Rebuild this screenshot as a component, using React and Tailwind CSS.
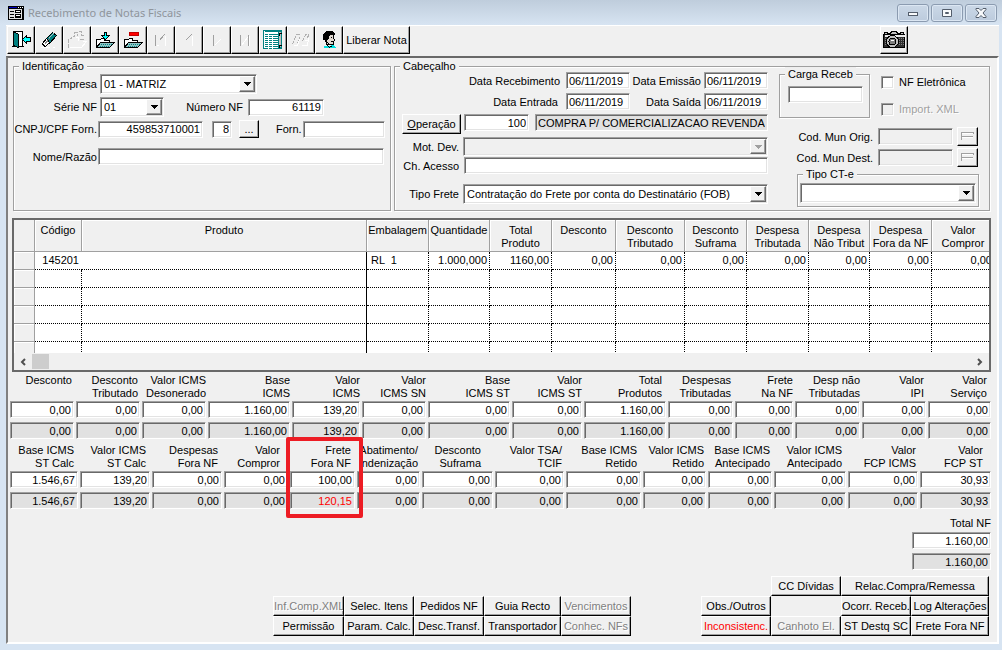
import clsx from "clsx";

const sunken =
  "border border-t-[#a0a0a0] border-l-[#a0a0a0] border-r-white border-b-white shadow-[inset_1px_1px_0_#696969,inset_-1px_-1px_0_#e3e3e3]";
const raised =
  "border border-t-white border-l-white border-r-black border-b-black shadow-[inset_-1px_-1px_0_#a0a0a0]";

const toolbar = [
  { name: "Sair", icon: "exit" },
  { name: "Limpar", icon: "eraser" },
  { name: "Pesquisar", icon: "query", disabled: true },
  { name: "Salvar", icon: "save" },
  { name: "Excluir", icon: "remove" },
  { name: "Primeiro", icon: "first", disabled: true },
  { name: "Anterior", icon: "prev", disabled: true },
  { name: "Próximo", icon: "next", disabled: true },
  { name: "Último", icon: "last", disabled: true },
  { name: "Lista", icon: "list" },
  { name: "Localizar", icon: "find", disabled: true },
  { name: "Usuário", icon: "user" },
];

const columns = [
  { label: ["Código"], width: "w-[47px]", value: "145201", align: "text-right pr-[3px]" },
  { label: ["Produto"], width: "", value: "", align: "text-right" },
  { label: ["Embalagem"], width: "w-[62px]", value: "RL  1", align: "text-left pl-1" },
  { label: ["Quantidade"], width: "w-[61px]", value: "1.000,000" },
  { label: ["Total", "Produto"], width: "w-[62px]", value: "1160,00" },
  { label: ["Desconto"], width: "w-[64px]", value: "0,00" },
  { label: ["Desconto", "Tributado"], width: "w-[69px]", value: "0,00" },
  { label: ["Desconto", "Suframa"], width: "w-[62px]", value: "0,00" },
  { label: ["Despesa", "Tributada"], width: "w-[62px]", value: "0,00" },
  { label: ["Despesa", "Não Tribut"], width: "w-[61px]", value: "0,00" },
  { label: ["Despesa", "Fora da NF"], width: "w-[62px]", value: "0,00" },
  { label: ["Valor", "Compror"], width: "w-[63px]", value: "0,00" },
];

const totals1 = [
  { label: ["Desconto", ""], value: "0,00" },
  { label: ["Desconto", "Tributado"], value: "0,00" },
  { label: ["Valor ICMS", "Desonerado"], value: "0,00", pad: "pr-0" },
  { label: ["Base", "ICMS"], value: "1.160,00", pad: "pr-0" },
  { label: ["Valor", "ICMS"], value: "139,20", pad: "pr-0" },
  { label: ["Valor", "ICMS SN"], value: "0,00", pad: "pr-0" },
  { label: ["Base", "ICMS ST"], value: "0,00", pad: "pr-0" },
  { label: ["Valor", "ICMS ST"], value: "0,00", pad: "pr-0" },
  { label: ["Total", "Produtos"], value: "1.160,00", pad: "pr-1" },
  { label: ["Despesas", "Tributadas"], value: "0,00" },
  { label: ["Frete", "Na NF"], value: "0,00", pad: "pr-0" },
  { label: ["Desp não", "Tributadas"], value: "0,00", pad: "pr-0" },
  { label: ["Valor", "IPI"], value: "0,00" },
  { label: ["Valor", "Serviço"], value: "0,00", pad: "pr-1" },
];

const totals2 = [
  { label: ["Base ICMS", "ST Calc"], value: "1.546,67", pad: "pr-1" },
  { label: ["Valor ICMS", "ST Calc"], value: "139,20", pad: "pr-1" },
  { label: ["Despesas", "Fora NF"], value: "0,00", pad: "pr-1" },
  { label: ["Valor", "Compror"], value: "0,00", pad: "pr-2" },
  { label: ["Frete", "Fora NF"], value: "100,00", calc: "120,15", pad: "pr-1", marked: true },
  { label: ["Abatimento/", "Indenização"], value: "0,00" },
  { label: ["Desconto", "Suframa"], value: "0,00", pad: "pr-3" },
  { label: ["Valor TSA/", "TCIF"], value: "0,00" },
  { label: ["Base ICMS", "Retido"], value: "0,00", pad: "pr-1" },
  { label: ["Valor ICMS", "Retido"], value: "0,00" },
  { label: ["Base ICMS", "Antecipado"], value: "0,00" },
  { label: ["Valor ICMS", "Antecipado"], value: "0,00", pad: "pr-1" },
  { label: ["Valor", "FCP ICMS"], value: "0,00" },
  { label: ["Valor", "FCP ST"], value: "30,93", pad: "pr-2" },
];

function Icon({ name }) {
  const folder = (
    <>
      <path d="M1 16V9h4l1-1h3v2h5v2" fill="#fff" stroke="#000" />
      <path d="M1 17l4-5h14l-5 5z" fill="#8fc4c4" stroke="#000" />
      <path d="M5 14h11M4 16h10" stroke="#008080" strokeDasharray="1 1" />
    </>
  );
  const shapes = {
    exit: (
      <>
        <path d="M2 1h9v15H2z" fill="#fff" stroke="#000" />
        <path d="M2 1l5 3v13l-5-2z" fill="#008080" stroke="#000" />
        <path d="M0 16h2M8 16h4" stroke="#000" />
        <path d="M11 9l4-4v2h4v4h-4v2z" fill="#00ffff" stroke="#000" />
      </>
    ),
    eraser: (
      <>
        <path d="M1 17h9M13 17h2" stroke="#fff" />
        <path d="M7 8l6-6 4 3-7 8z" fill="#008080" stroke="#000" />
        <path d="M3 13l4-5 3 4-4 4-2-1z" fill="#fff" stroke="#000" />
        <path d="M5 14l5-6" stroke="#808080" />
        <path d="M9 8l5-5" stroke="#c0c0c0" />
      </>
    ),
    query: (
      <>
        <path d="M1 17V8h3V6h3V2h3v3M11 1h3v4h3M12 9h5" stroke="#b0b0b0" strokeDasharray="4 1" />
        <path d="M2 17h12l5-6h-4M8 7h3v3" stroke="#fff" />
      </>
    ),
    save: (
      <>
        {folder}
        <path d="M9 2h2v3h3l-4 4-4-4h3z" fill="#00ffff" stroke="#000" />
      </>
    ),
    remove: (
      <>
        {folder}
        <path d="M6 2h9v3H6z" fill="#ff0000" stroke="#c00000" />
      </>
    ),
    first: (
      <>
        <path d="M4 4v11M8 10l5-6" stroke="#a0a0a0" />
        <path d="M5 15h2M14 5v10" stroke="#fff" />
      </>
    ),
    prev: (
      <>
        <path d="M6 10l6-6" stroke="#a0a0a0" />
        <path d="M13 5v10" stroke="#fff" />
      </>
    ),
    next: (
      <>
        <path d="M6 4v11" stroke="#a0a0a0" />
        <path d="M7 15l6-6" stroke="#fff" />
      </>
    ),
    last: (
      <>
        <path d="M5 4v11M13 4v11" stroke="#a0a0a0" />
        <path d="M6 15l6-8M14 5v10" stroke="#fff" />
      </>
    ),
    list: (
      <>
        <path d="M0 0h18v18H0z" fill="#fff" stroke="#008080" />
        <path d="M1 1h14M1 4h14M1 6h14M1 8h14M1 10h14M1 12h14M1 14h14M1 16h14" stroke="#008080" />
        <path d="M5 2v16M9 4v14" stroke="#fff" />
        <path d="M15 1h3v16h-3z" fill="#c0c0c0" stroke="#008080" />
        <path d="M15 3h3M16 2v3M15 15h3M16 14v3" stroke="#000" />
      </>
    ),
    find: (
      <>
        <path d="M1 14l4-10h3M6 13l2-6M11 11l3-7h3l-1 4" stroke="#b0b0b0" strokeDasharray="4 1" />
        <path d="M2 15h4l2-6M10 15h6l1-7M13 10h3" stroke="#fff" />
      </>
    ),
    user: (
      <>
        <path d="M6 3h8v4l1 3-1 1v3H8L5 9z" fill="#e0d8d0" stroke="#000" />
        <path d="M4 9V4l3-3h6l2 2v1h-4l-2 2v2H8l-1 2z" fill="#000" stroke="#000" />
        <path d="M11 7h1M14 7h0M11 11h2M7 11l3 3" stroke="#000" />
        <path d="M4 17l1-2h2l3 1 3-2 3 3z" fill="#00e0e0" />
        <path d="M7 14l3 3 3-2" stroke="#000" />
      </>
    ),
  };
  return (
    <svg viewBox="0 0 20 20" className="size-5" shapeRendering="crispEdges" fill="none">
      <g transform="translate(0.5 0.5)">{shapes[name]}</g>
    </svg>
  );
}

function FormIcon() {
  return (
    <svg viewBox="0 0 16 16" className="size-4" shapeRendering="crispEdges">
      <path d="M0 1h16v14H0z" fill="#000" />
      <path d="M1 4h13v10H1z" fill="#e0e0e0" />
      <path d="M1 2h8v1H1z" fill="#0000c0" />
      <path d="M10 2h1v1h-1zM12 2h1v1h-1zM14 2h1v1h-1z" fill="#fff" />
      <path d="M2 6h4v1H2zM2 9h4v1H2zM2 12h4v1H2zM7 5h6v3H7zM7 9h6v4H7z" fill="#000" />
      <path d="M8 6h4v1H8zM8 10h4v1H8z" fill="#fff" />
    </svg>
  );
}

function CameraIcon() {
  return (
    <svg viewBox="0 0 24 20" className="h-5 w-6" shapeRendering="crispEdges">
      <g transform="translate(0.5 0.5)">
        <path d="M2 4V2h3v1h3l1-2h5l1 2h3V2h3v2z" fill="#c0c0c0" stroke="#000" />
        <path d="M1 4h21v13H1z" fill="#303030" stroke="#000" />
        <path d="M2 5h20M2 6h20" stroke="#e8e8e8" />
        <path d="M2 8h20M2 10h20M2 12h20M2 14h20" stroke="#808080" strokeDasharray="1 1" />
        <circle cx="10" cy="11" r="6" fill="#c0c0c0" stroke="#000" />
        <circle cx="10" cy="11" r="3.5" fill="#808080" stroke="#000" />
        <path d="M8 10h3" stroke="#fff" />
      </g>
    </svg>
  );
}

function WindowButton({ name, children }) {
  return (
    <button
      aria-label={name}
      className="flex h-[18px] w-8 items-center justify-center rounded-[3px] border border-[#8b9bb0] bg-linear-to-b from-[#cbd8e7] to-[#bccbdd] shadow-[inset_0_0_0_1px_#dce7f3]"
    >
      <svg viewBox="0 0 12 10" className="h-2.5 w-3" fill="#f8fafc" stroke="#535d6b">
        {children}
      </svg>
    </button>
  );
}

function Field({ className, ...props }) {
  return (
    <input
      type="text"
      className={clsx(sunken, "h-[17px] min-w-0 px-[2px] leading-[14px] disabled:bg-[#f0f0f0]", className || "bg-white")}
      {...props}
    />
  );
}

function Select({ id, options, disabled, className, height = "h-5", ...props }) {
  return (
    <div className={clsx("relative", height, className)}>
      <select
        id={id}
        disabled={disabled}
        className={clsx(sunken, "block size-full appearance-none pl-[3px] pr-5", disabled ? "bg-[#f0f0f0]" : "bg-white")}
        {...props}
      >
        {options.map((o) => (
          <option key={o}>{o}</option>
        ))}
      </select>
      <span
        className={clsx(
          "pointer-events-none absolute inset-y-[2px] right-[2px] flex w-4 items-center justify-center border border-t-white border-l-white border-r-[#696969] border-b-[#696969] bg-[#f0f0f0] shadow-[inset_-1px_-1px_0_#a0a0a0]",
          disabled ? "text-[#a0a0a0]" : "text-black"
        )}
      >
        <svg viewBox="0 0 7 4" className="h-1 w-[7px]" shapeRendering="crispEdges">
          <path d="M0 0h7v1H0zM1 1h5v1H1zM2 2h3v1H2zM3 3h1v1H3z" fill="currentColor" />
        </svg>
      </span>
    </div>
  );
}

function Group({ title, className, children }) {
  return (
    <fieldset
      className={clsx("min-w-0 border border-[#a0a0a0] shadow-[1px_1px_0_#fff,inset_1px_1px_0_#fff]", className)}
    >
      <legend className="ml-[5px] bg-[#f0f0f0] px-[3px] leading-[14px]">{title}</legend>
      {children}
    </fieldset>
  );
}

function Button({ className, children, disabled }) {
  return (
    <button
      disabled={disabled}
      className={clsx(
        raised,
        "overflow-hidden bg-[#f0f0f0] text-center whitespace-nowrap",
        disabled && "text-[#808080] [text-shadow:1px_1px_0_#fff]",
        className
      )}
    >
      {children}
    </button>
  );
}

function Total({ id, item }) {
  const name = item.label.join(" ").trim();
  return (
    <div className="relative flex min-w-0 flex-col pr-[2px]">
      <label htmlFor={id} className={clsx("flex flex-col items-end leading-[13px] whitespace-nowrap", item.pad || "pr-[2px]")}>
        <span>{item.label[0]}</span>
        <span className="h-[13px]">{item.label[1]}</span>
      </label>
      <Field id={id} defaultValue={item.value} className="mt-px w-full bg-white text-right" />
      <Field
        aria-label={`${name} calculado`}
        readOnly
        value={item.calc || item.value}
        className={clsx("mt-1 w-full bg-[#e1e1e1] text-right", item.calc && "text-[#ff0000]")}
      />
      {item.marked && (
        <div className="pointer-events-none absolute -top-[7px] -right-[6px] -bottom-[9px] -left-1 z-10 rounded-[2px] border-4 border-[#ed1c24]" />
      )}
    </div>
  );
}

function Identificacao() {
  const label = "w-[83px] shrink-0 text-right whitespace-nowrap";
  return (
    <Group title="Identificação" className="w-[378px] shrink-0">
      <div className="mt-px flex items-center">
        <label htmlFor="empresa" className={label}>Empresa</label>
        <Select id="empresa" options={["01 - MATRIZ"]} className="ml-[3px] w-[157px]" />
      </div>
      <div className="mt-[3px] flex items-center">
        <label htmlFor="serie" className={label}>Série NF</label>
        <Select id="serie" options={["01"]} className="ml-[3px] w-16" />
        <label htmlFor="numero" className="w-[79px] text-right">Número NF</label>
        <Field id="numero" defaultValue="61119" className="ml-[5px] w-[76px] bg-white text-right" />
      </div>
      <div className="mt-[3px] flex items-center">
        <label htmlFor="cnpj" className={label}>CNPJ/CPF Forn.</label>
        <Field id="cnpj" defaultValue="459853710001" className="ml-px w-[105px] bg-white text-right" />
        <Field aria-label="Dígito" defaultValue="8" className="ml-[9px] w-5 bg-white text-right" />
        <Button className="ml-[7px] h-[18px] w-5">...</Button>
        <label htmlFor="forn" className="ml-[17px]">Forn.</label>
        <Field id="forn" className="mr-[5px] ml-px flex-1 bg-white text-right" />
      </div>
      <div className="mt-[10px] flex items-center">
        <label htmlFor="nome" className={label}>Nome/Razão</label>
        <Field id="nome" className="mr-[6px] ml-px flex-1 bg-white" />
      </div>
    </Group>
  );
}

function MunButton({ name }) {
  return (
    <button disabled aria-label={name} className={clsx(raised, "ml-1 flex h-[19px] w-[21px] items-center justify-center")}>
      <svg viewBox="0 0 13 9" className="h-[9px] w-[13px]" fill="none" stroke="#a0a0a0" shapeRendering="crispEdges">
        <path d="M0 0.5h13M0.5 0v8M1 4.5h11M12.5 0v2" />
        <path d="M1 1.5h11M1 5.5h11" stroke="#fff" />
      </svg>
    </button>
  );
}

function Cabecalho() {
  const label = "w-[64px] shrink-0 text-right whitespace-nowrap";
  const date = "w-16 bg-white";
  return (
    <Group title="Cabeçalho" className="flex-1">
      <div className="-mt-1.5 flex pb-[3px]">
        <div className="min-w-0 flex-1 pt-[5px]">
          <div className="flex items-center justify-end">
            <label htmlFor="recebimento">Data Recebimento</label>
            <Field id="recebimento" defaultValue="06/11/2019" className={clsx(date, "ml-[6px]")} />
            <label htmlFor="emissao" className="w-[71px] text-right whitespace-nowrap">Data Emissão</label>
            <Field id="emissao" defaultValue="06/11/2019" className={clsx(date, "ml-[3px]")} />
          </div>
          <div className="mt-1 flex items-center justify-end">
            <label htmlFor="entrada">Data Entrada</label>
            <Field id="entrada" defaultValue="06/11/2019" className={clsx(date, "ml-[8px]")} />
            <label htmlFor="saida" className="w-[71px] text-right">Data Saída</label>
            <Field id="saida" defaultValue="06/11/2019" className={clsx(date, "ml-[3px]")} />
          </div>
          <div className="mt-1 flex items-start">
            <Button className="ml-[7px] h-5 w-[59px]">
              <u>O</u>peração
            </Button>
            <Field aria-label="Código da operação" defaultValue="100" className="ml-[3px] w-[65px] bg-white text-right" />
            <Field aria-label="Operação" readOnly value="COMPRA P/ COMERCIALIZACAO REVENDA" className="ml-[6px] flex-1 bg-[#e1e1e1]" />
          </div>
          <div className="mt-[3px] flex items-center">
            <label htmlFor="motivo" className={label}>Mot. Dev.</label>
            <Select id="motivo" disabled options={[""]} height="h-[19px]" className="ml-[4px] flex-1" />
          </div>
          <div className="mt-px flex items-center">
            <label htmlFor="chave" className={label}>Ch. Acesso</label>
            <Field id="chave" className="ml-[5px] flex-1 bg-white" />
          </div>
          <div className="mt-[10px] flex items-center">
            <label htmlFor="frete" className={label}>Tipo Frete</label>
            <Select
              id="frete"
              options={["Contratação do Frete por conta do Destinatário (FOB)"]}
              className="ml-[4px] flex-1"
            />
          </div>
        </div>

        <div className="mr-[10px] ml-[11px] w-[200px] shrink-0">
          <div className="flex">
            <Group title="Carga Receb" className="h-[51px] w-[91px]">
              <Field aria-label="Carga Receb" className="mt-[5px] ml-[8px] w-[75px] bg-white" />
            </Group>
            <div className="ml-[11px] flex flex-col gap-[13px] pt-[8px] whitespace-nowrap">
              <label className="flex h-[14px] items-center gap-[5px]">
                <input type="checkbox" className={clsx(sunken, "size-[13px] appearance-none bg-white")} />
                NF Eletrônica
              </label>
              <label className="flex h-[14px] items-center gap-[5px] text-[#a0a0a0] [text-shadow:1px_1px_0_#fff]">
                <input type="checkbox" disabled className={clsx(sunken, "size-[13px] appearance-none bg-[#f0f0f0]")} />
                Import. XML
              </label>
            </div>
          </div>
          <div className="mt-[9px] mr-px flex items-center justify-end">
            <label htmlFor="orig">Cod. Mun Orig.</label>
            <Field id="orig" disabled className="ml-[5px] w-[75px]" />
            <MunButton name="Buscar município de origem" />
          </div>
          <div className="mt-[2px] mr-px flex items-center justify-end">
            <label htmlFor="dest">Cod. Mun Dest.</label>
            <Field id="dest" disabled className="ml-[5px] w-[75px]" />
            <MunButton name="Buscar município de destino" />
          </div>
          <Group title="Tipo CT-e" className="ml-[18px] h-10">
            <Select aria-label="Tipo CT-e" options={[""]} className="mx-[2px] mt-[2px]" />
          </Group>
        </div>
      </div>
    </Group>
  );
}

function ItemsTable() {
  return (
    <div className="mx-[2px] mt-[7px] border-2 border-[#696969] bg-white">
      <div className="h-[133px] overflow-hidden">
        <table className="w-[calc(100%+6px)] table-fixed border-separate border-spacing-0">
          <colgroup>
            <col className="w-[21px]" />
            {columns.map((c, i) => (
              <col key={i} className={c.width} />
            ))}
          </colgroup>
          <thead>
            <tr className="h-8">
              <th aria-label="Seleção" className="border-r border-b border-[#a0a0a0] bg-[#f0f0f0]" />
              {columns.map((c, i) => (
                <th
                  key={i}
                  className="overflow-hidden border-r border-b border-[#a0a0a0] bg-[#f0f0f0] pt-1 align-top leading-[13px] font-normal whitespace-nowrap shadow-[inset_1px_1px_0_#fff]"
                >
                  {c.label.map((l) => (
                    <div key={l}>{l}</div>
                  ))}
                </th>
              ))}
            </tr>
          </thead>
          <tbody>
            {[0, 1, 2, 3, 4, 5].map((row) => (
              <tr key={row} className="h-[18px]">
                <td className="border-r border-b border-[#a0a0a0] bg-[#f0f0f0] shadow-[inset_1px_1px_0_#fff]" />
                {columns.map((c, i) => (
                  <td
                    key={i}
                    className={clsx(
                      "overflow-hidden border-b border-dotted border-black leading-[17px] whitespace-pre",
                      i === 1 ? "[border-right:1px_solid_black]" : row === 0 && i === 0 ? "" : "border-r",
                      c.align || "pr-[2px] text-right"
                    )}
                  >
                    {row === 0 ? c.value : ""}
                  </td>
                ))}
              </tr>
            ))}
          </tbody>
        </table>
      </div>
      <div className="flex h-[17px] items-center bg-[#f0f0f0] text-[#505050]">
        <button aria-label="Rolar para a esquerda" className="flex w-[18px] justify-center">
          <svg viewBox="0 0 6 8" className="h-2 w-1.5" fill="none" stroke="currentColor" strokeWidth="2">
            <path d="M5 1L2 4l3 3" />
          </svg>
        </button>
        <div className="h-[15px] w-[17px] bg-[#cdcdcd]" />
        <button aria-label="Rolar para a direita" className="ml-auto flex w-[18px] justify-center">
          <svg viewBox="0 0 6 8" className="h-2 w-1.5" fill="none" stroke="currentColor" strokeWidth="2">
            <path d="M1 1l3 3-3 3" />
          </svg>
        </button>
      </div>
    </div>
  );
}

export default function App() {
  return (
    <div className="flex min-h-screen flex-col bg-[#d7e4f2] pr-[3px] pb-[6px] pl-[6px] font-['Liberation_Sans',Arial,sans-serif] text-[11px] leading-[14px] text-black">
      <header className="-mr-[3px] -ml-[6px] flex h-[25px] items-center bg-linear-to-b from-[#bfcddc] to-[#d7e4f2] pr-[5px] pl-2">
        <FormIcon />
        <h1 className="ml-1 flex-1 pt-px font-['Noto_Sans','Open_Sans',sans-serif] text-[11px] text-[#8f959c]">
          Recebimento de Notas Fiscais
        </h1>
        <div className="flex gap-[2px]">
          <WindowButton name="Minimizar">
            <rect x="1.5" y="4.5" width="9" height="3" />
          </WindowButton>
          <WindowButton name="Maximizar">
            <path d="M1.5 1.5h9v7h-9zM4.5 4.5h3v1h-3z" />
          </WindowButton>
          <WindowButton name="Fechar">
            <path d="M1 .5h3l2 2 2-2h3v1L8 5l3 3.5v1H8l-2-2-2 2H1v-1L4 5 1 1.5z" />
          </WindowButton>
        </div>
      </header>

      <div className="flex h-[31px] items-start border-t border-white bg-[#f0f0f0] pr-[91px] pl-px">
        {toolbar.map((t) => (
          <button
            key={t.name}
            aria-label={t.name}
            disabled={t.disabled}
            className={clsx(raised, "flex size-7 shrink-0 items-center justify-center")}
          >
            <Icon name={t.icon} />
          </button>
        ))}
        <Button className="h-7 w-[67px]">Liberar Nota</Button>
        <button aria-label="Fotografar" className={clsx(raised, "ml-auto flex size-7 items-center justify-center")}>
          <CameraIcon />
        </button>
      </div>

      <main className="flex flex-1 flex-col border-2 border-t-[#696969] border-l-[#808080] border-r-white border-b-white bg-[#f0f0f0] pt-px pr-1 pl-[2px]">
        <div className="flex gap-[3px] pr-[3px] pl-[3px]">
          <Identificacao />
          <Cabecalho />
        </div>

        <ItemsTable />

        <div className="mt-[2px] grid grid-cols-[66fr_66fr_66fr_84fr_70fr_66fr_84fr_72fr_84fr_67fr_60fr_67fr_66fr_65fr]">
          {totals1.map((item, i) => (
            <Total key={i} id={`total1-${i}`} item={item} />
          ))}
        </div>
        <div className="mt-[5px] grid grid-cols-[70fr_72fr_72fr_66fr_67fr_65fr_73fr_71fr_77fr_65fr_66fr_74fr_72fr_73fr]">
          {totals2.map((item, i) => (
            <Total key={i} id={`total2-${i}`} item={item} />
          ))}
        </div>

        <div className="mt-[7px] mr-[2px] flex flex-col items-end">
          <label htmlFor="total-nf">Total NF</label>
          <Field id="total-nf" defaultValue="1.160,00" className="mt-[2px] w-[79px] bg-white text-right" />
          <Field aria-label="Total NF calculado" readOnly value="1.160,00" className="mt-1 w-[79px] bg-[#e1e1e1] text-right" />
        </div>

        <div className="mt-auto flex items-end justify-end gap-[70px] pr-[4px] pb-[6px]">
          <div className="grid auto-rows-[20px] grid-cols-[71px_70px_70px_77px_70px]">
            <Button disabled>Inf.Comp.XML</Button>
            <Button>Selec. Itens</Button>
            <Button>Pedidos NF</Button>
            <Button>Guia Recto</Button>
            <Button disabled>Vencimentos</Button>
            <Button>Permissão</Button>
            <Button>Param. Calc.</Button>
            <Button>Desc.Transf.</Button>
            <Button>Transportador</Button>
            <Button disabled>Conhec. NFs</Button>
          </div>
          <div className="grid auto-rows-[20px] grid-cols-[70px_70px_70px_78px]">
            <Button className="col-start-2">CC Dívidas</Button>
            <Button className="col-span-2">Relac.Compra/Remessa</Button>
            <Button className="col-start-1">Obs./Outros</Button>
            <Button className="col-start-3">Ocorr. Receb.</Button>
            <Button>Log Alterações</Button>
            <Button className="text-[#ff0000]">Inconsistenc.</Button>
            <Button disabled>Canhoto El.</Button>
            <Button>ST Destq SC</Button>
            <Button>Frete Fora NF</Button>
          </div>
        </div>
      </main>
    </div>
  );
}
